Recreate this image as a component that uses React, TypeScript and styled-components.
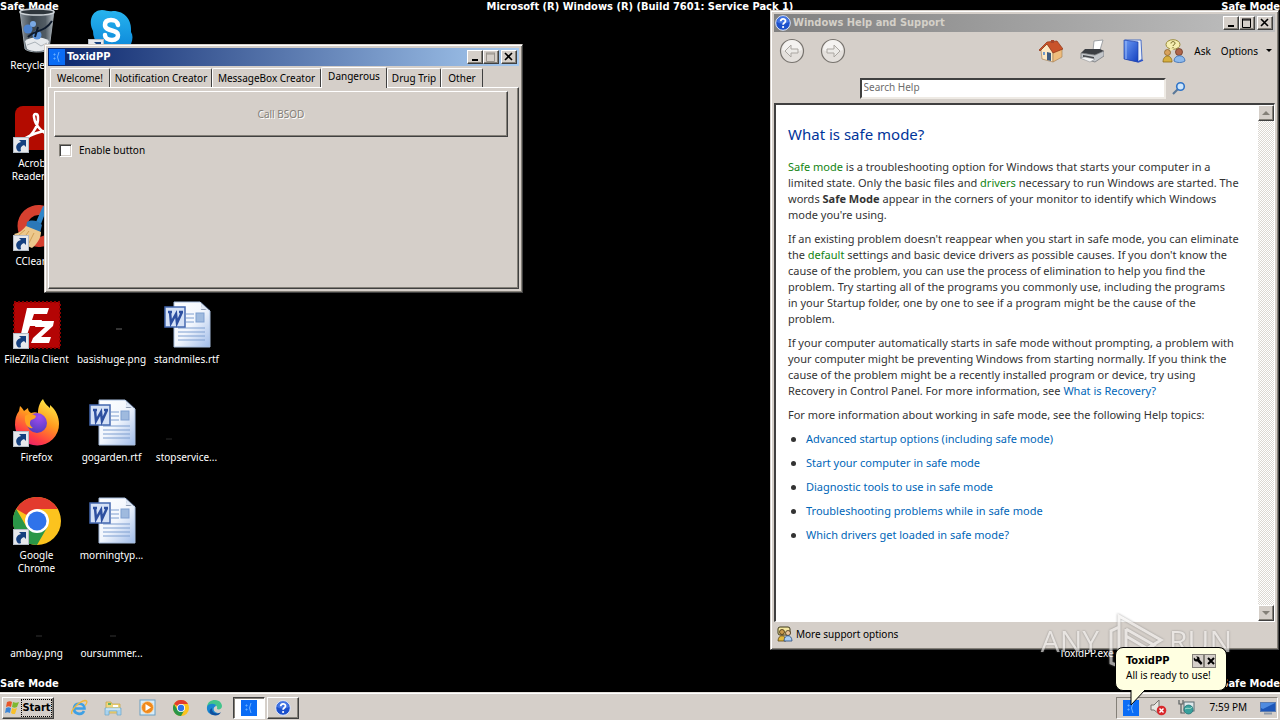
import React from "react";
import styled, { createGlobalStyle, css } from "styled-components";

const face = "#d5cfc9";
const ui = `"Noto Sans", "Open Sans", sans-serif`;
const uiBold = `"DejaVu Sans Condensed", "DejaVu Sans", sans-serif`;

const GlobalStyle = createGlobalStyle`
  * { box-sizing: border-box; }
  body { margin: 0; background: #000; font: 10px/13px ${ui}; color: #000; }
  button, input { font: inherit; color: inherit; margin: 0; }
  a { text-decoration: none; }
`;

const raised = css`
  border: 1px solid;
  border-color: #fff #404040 #404040 #fff;
  box-shadow: inset -1px -1px 0 #848078;
`;

const Page = styled.div`
  position: relative;
  display: flex;
  flex-direction: column;
  min-height: 100vh;
  overflow: hidden;
`;

const Desktop = styled.main`
  position: relative;
  flex: 1;
  display: flex;
  flex-direction: column;
`;

const SafeRow = styled.div`
  display: flex;
  justify-content: space-between;
  color: #fff;
  font: bold 11px/14px ${uiBold};
  white-space: nowrap;
`;

const SafeTop = styled(SafeRow)`
  position: absolute;
  inset: 0 0 auto 0;
`;

const SafeBottom = styled(SafeRow)`
  position: absolute;
  inset: auto 0 1px 0;
`;

const IconGrid = styled.ul`
  position: relative;
  display: grid;
  grid-template-columns: repeat(auto-fill, 75px);
  grid-template-rows: repeat(7, 98px);
  margin: 0 0 -2px;
  padding: 7px 0 0;
  list-style: none;
`;

const Shortcut = styled.li<{ $col: number; $row: number }>`
  grid-column: ${(p) => p.$col};
  grid-row: ${(p) => p.$row};
  display: flex;
  flex-direction: column;
  align-items: center;
  gap: 4px;
  padding-right: 2px;
  color: #fff;
  text-align: center;
  white-space: pre-line;

  svg { display: block; }
`;

const Win = styled.section`
  position: absolute;
  display: flex;
  flex-direction: column;
  padding: 3px;
  background: ${face};
  border: 1px solid;
  border-color: ${face} #404040 #404040 ${face};
  box-shadow: inset 1px 1px 0 #fff, inset -1px -1px 0 #848078;
`;

const ToxidWin = styled(Win)`
  left: 44px;
  top: 44px;
  width: 479px;
  height: 249px;
`;

const HelpWin = styled(Win)`
  right: 1px;
  top: 10px;
  bottom: 42px;
  width: 509px;
`;

const TitleBar = styled.header<{ $active?: boolean }>`
  display: flex;
  align-items: center;
  height: 18px;
  flex: none;
  padding: 0 2px 0 1px;
  gap: 2px;
  color: ${(p) => (p.$active ? "#fff" : "#d4d0c8")};
  background: ${(p) =>
    p.$active
      ? "linear-gradient(90deg, #0a246a, #a6caf0)"
      : "linear-gradient(90deg, #808080, #c0c0c0)"};
  font: bold 11px/18px ${uiBold};

  h1 { flex: 1; margin: 0; font: inherit; }
`;

const Caption = styled.div`
  display: flex;
`;

const CaptionButton = styled.button<{ $apart?: boolean }>`
  ${raised}
  display: grid;
  place-items: center;
  width: 16px;
  height: 14px;
  padding: 0;
  margin-left: ${(p) => (p.$apart ? "2px" : "0")};
  background: ${face};
`;

const Tabs = styled.div`
  position: relative;
  display: flex;
  align-items: flex-end;
  height: 22px;
  padding-left: 2px;
  margin-bottom: -1px;
`;

const Tab = styled.button<{ $w: number; $on?: boolean }>`
  flex: 0 0 ${(p) => p.$w}px;
  height: ${(p) => (p.$on ? 21 : 19)}px;
  margin-bottom: ${(p) => (p.$on ? 0 : 1)}px;
  padding: 0 0 ${(p) => (p.$on ? 4 : 0)}px;
  border: 1px solid;
  border-width: 1px 1px 0 1px;
  border-color: #fff #404040 #404040 #fff;
  border-radius: 2px 2px 0 0;
  background: ${face};
  white-space: nowrap;
`;

const Panel = styled.div`
  ${raised}
  flex: 1;
  display: flex;
  flex-direction: column;
  align-items: flex-start;
  padding: 3px 10px 4px 5px;
`;

const BigButton = styled.button`
  ${raised}
  align-self: stretch;
  height: 46px;
  background: ${face};
  color: #848078;
  text-shadow: 1px 1px 0 #fff;
`;

const Check = styled.label`
  display: flex;
  align-items: center;
  gap: 7px;
  margin: 7px 0 0 5px;

  input {
    appearance: none;
    width: 13px;
    height: 13px;
    background: #fff;
    border: 1px solid;
    border-color: #848078 #fff #fff #848078;
    box-shadow: inset 1px 1px 0 #404040, inset -1px -1px 0 ${face};
  }
`;

const HelpBar = styled.nav`
  display: flex;
  align-items: center;
  height: 38px;
  flex: none;
  padding: 0 2px 0 5px;
`;

const NavButtons = styled.div`
  display: flex;
  gap: 15px;
  flex: 1;
`;

const FlatButton = styled.button`
  display: flex;
  align-items: center;
  justify-content: center;
  gap: 8px;
  padding: 0;
  border: 0;
  background: none;
`;

const Tools = styled.div`
  display: flex;
  gap: 17px;
`;

const Words = styled.div`
  display: flex;
  gap: 10px;
`;

const SearchBar = styled.form`
  display: flex;
  align-items: center;
  justify-content: center;
  gap: 6px;
  height: 33px;
  flex: none;
  padding: 3px 4px 0 0;
`;

const SearchInput = styled.input`
  width: 306px;
  height: 21px;
  padding: 0 2px 2px;
  border: 2px solid;
  border-color: #404040 #eeeae4 #eeeae4 #404040;
  background: #fff;
  outline: 0;

  &::placeholder { color: #6d6d6d; opacity: 1; }
`;

const Viewer = styled.div`
  flex: 1;
  display: flex;
  min-height: 0;
  border: 1px solid;
  border-width: 2px 1px 1px 2px;
  border-color: #404040 #fff #fff #404040;
  background: #fff;
`;

const Article = styled.article`
  flex: 1;
  padding: 19px 13px 0 12px;
  font: 11px/16px ${ui};
  color: #333;

  h2 { margin: 0 0 15px; font: 15px/20px ${ui}; color: #003399; }
  p { margin: 0 0 8px; }
`;

const Topics = styled.ul`
  margin: 0;
  padding: 0 0 0 3px;
  list-style: none;

  li {
    display: flex;
    align-items: center;
    gap: 10px;
    margin: 0 0 8px;
  }
  li::before {
    content: "";
    width: 5px;
    height: 5px;
    border-radius: 50%;
    background: #333;
  }
`;

const Link = styled.a`color: #0066b8;`;
const Term = styled.a`color: #128412;`;

const Scroll = styled.div`
  display: flex;
  flex-direction: column;
  justify-content: space-between;
  width: 16px;
  background: repeating-conic-gradient(#fff 0 25%, #dcd8d2 0 50%) 0 0 / 2px 2px;
`;

const ScrollButton = styled.button`
  ${raised}
  display: grid;
  place-items: center;
  width: 16px;
  height: 16px;
  padding: 0;
  background: ${face};
`;

const Footer = styled.footer`
  display: flex;
  align-items: center;
  gap: 3px;
  height: 24px;
  flex: none;
  padding-left: 3px;
`;

const Taskbar = styled.footer`
  display: flex;
  align-items: center;
  height: 28px;
  padding: 2px 2px 0;
  background: ${face};
  border-top: 1px solid #e4e0da;
  box-shadow: inset 0 1px 0 #fff;
`;

const StartButton = styled.button`
  ${raised}
  display: flex;
  align-items: center;
  gap: 1px;
  width: 52px;
  height: 22px;
  padding: 0 1px;
  background: ${face};
  font: bold 11px/16px ${uiBold};

  span {
    flex: 1;
    height: 18px;
    outline: 1px dotted #000;
    outline-offset: -1px;
    line-height: 18px;
    text-align: center;
  }
`;

const QuickLaunch = styled.div`
  display: flex;
  padding: 0 2px 0 8px;
`;

const Launch = styled.button`
  display: grid;
  place-items: center;
  width: 34px;
  height: 22px;
  padding: 0;
  border: 0;
  background: none;

  &:last-child { width: 33px; }
`;

const Task = styled.button<{ $on?: boolean }>`
  ${raised}
  display: grid;
  place-items: center;
  width: 32px;
  height: 22px;
  padding: 0;
  margin-right: 2px;
  background: ${(p) => (p.$on ? "#fff" : face)};
  ${(p) =>
    p.$on &&
    css`
      border-color: #404040 #fff #fff #404040;
      box-shadow: inset 1px 1px 0 #848078;
    `}
`;

const Tray = styled.div`
  display: flex;
  align-items: center;
  justify-content: space-between;
  width: 162px;
  height: 22px;
  margin-left: auto;
  padding: 0 1px 0 6px;
  border: 1px solid;
  border-color: #848078 #fff #fff #848078;
`;

const Clock = styled.time`padding: 0 2px 0 4px;`;

const Balloon = styled.aside`
  position: absolute;
  right: 53px;
  bottom: 29px;
  width: 112px;
  height: 44px;
  padding: 6px 10px;
  background: #ffffe1;
  border: 1px solid #000;
  border-radius: 8px;
  line-height: 14px;
  white-space: nowrap;
`;

const BalloonHead = styled.div`
  display: flex;
  align-items: center;
  height: 14px;

  strong { flex: 1; font: bold 11px/14px ${uiBold}; }
`;

const BalloonButton = styled.button`
  display: grid;
  place-items: center;
  width: 12px;
  height: 14px;
  padding: 0;
  background: ${face};
  border: 1px solid #848078;
`;

const Tail = styled.svg`
  position: absolute;
  left: 14px;
  top: 41px;
`;

const Watermark = styled.div`
  position: absolute;
  right: 48px;
  bottom: 49px;
  display: flex;
  align-items: center;
  opacity: 0.65;
  color: #f4f2f0;
  font: 400 30px/60px "Open Sans", sans-serif;
  text-shadow: 0 0 2px #666;
  pointer-events: none;

  svg { filter: drop-shadow(0 0 1px #777); }
`;

const Arrow = () => (
  <g>
    <rect x=".5" y="32.500" width="15" height="15" fill="#e6e8ec" stroke="#b4bcc6" />
    <path d="M4 45c-2-4 0-7 4-8l-2-2h7v7l-2-2c-3 1-4 3-3 6-2 1-3 .5-4-1z" fill="#15407f" />
  </g>
);

const Big = ({ children }: { children?: React.ReactNode }) => (
  <svg width="48" height="48" viewBox="0 0 48 48" aria-hidden="true">
    {children}
  </svg>
);

const Bin = () => (
  <Big>
    <defs>
      <linearGradient id="bin" x1="0" y1="0" x2="1" y2="0">
        <stop offset="0" stopColor="#8a949c" />
        <stop offset=".35" stopColor="#3c464e" />
        <stop offset=".75" stopColor="#525c64" />
        <stop offset="1" stopColor="#b4bcc2" />
      </linearGradient>
    </defs>
    <path d="M7 4h34l-5 38c-3 4-20 4-24 0z" fill="url(#bin)" stroke="#9aa3aa" />
    <ellipse cx="24" cy="5" rx="17" ry="3" fill="#2e363c" stroke="#cdd3d8" strokeWidth="1.500" />
    <path d="M12 34c6-5 18-5 24 0l-2 8c-6 3-15 3-20 0z" fill="#e6e9ec" />
    <path d="M14 38l8-3 6 4 6-3" stroke="#aab2b8" fill="none" />
    <circle cx="15" cy="22" r="4.500" fill="#4c83cf" />
    <circle cx="24" cy="28" r="4.500" fill="#5b93dc" />
    <circle cx="20" cy="17" r="3" fill="#7aa9e4" />
    <path d="M15 30c8-8 16-4 24-16M22 30l3-10" stroke="#0e1a2c" strokeWidth="2" fill="none" />
  </Big>
);

const Skype = () => (
  <Big>
    <defs>
      <linearGradient id="sky" x1="0" y1="0" x2="0" y2="1">
        <stop offset="0" stopColor="#27b4ee" />
        <stop offset="1" stopColor="#0a84d8" />
      </linearGradient>
    </defs>
    <path d="M14 3c5 0 6 2 11 1 12 0 19 9 18 21 2 3 2 7 0 12-3 8-11 9-16 6-12 2-22-7-22-19C0 14 4 3 14 3z" fill="url(#sky)" />
    <path d="M30 18c-1-4-3-5-7-5-4 0-6 2-6 5 0 7 13 4 13 10 0 4-3 5-6 5-4 0-7-2-7-5" fill="none" stroke="#fff" strokeWidth="4.500" strokeLinecap="round" />
    <Arrow />
  </Big>
);

const Acrobat = () => (
  <Big>
    <rect x="2" y="1" width="45" height="44" rx="8" fill="#b30b00" />
    <path d="M9 36c8-3 17-14 16-24 0-4-5-4-4 0 1 9 10 18 18 18 5 0 4-4 0-4-10-1-23 4-29 9-2 2-2 3-1 1z" fill="none" stroke="#fff" strokeWidth="2.500" />
    <Arrow />
  </Big>
);

const CCleaner = () => (
  <Big>
    <path d="M42 10A21 21 0 1 0 42 36l-8-6a11 11 0 1 1 0-14z" fill="#d6402f" />
    <path d="M30 3l4 2-6 16-5-2z" fill="#2f86c8" />
    <path d="M14 19c5-3 12-1 15 3l-2 8-14-5z" fill="#2b78b8" />
    <path d="M13 23l15 6c0 6-4 12-9 16-6-2-12-7-18-14 5-1 9-4 12-8z" fill="#ecc88c" />
    <path d="M16 28l-6 8M21 30l-5 10M12 27l-6 5" stroke="#cf9f55" fill="none" />
    <Arrow />
  </Big>
);

const FileZilla = () => (
  <Big>
    <rect x="1" y="1" width="46" height="46" fill="#b40404" stroke="#8c0000" strokeWidth="2" strokeDasharray="2 2" />
    <path d="M14 7h22l-2 6H21l-2 6h10l-2 6H17l-4 12H7z" fill="#fff" />
    <path d="M24 20h17l-1 5-12 11h10l-2 6H18l2-5 12-11h-10z" fill="#fff" />
    <Arrow />
  </Big>
);

const Firefox = () => (
  <Big>
    <defs>
      <linearGradient id="ff" x1=".8" y1="0" x2=".3" y2="1">
        <stop offset="0" stopColor="#fff04a" />
        <stop offset=".45" stopColor="#ff9a1f" />
        <stop offset=".8" stopColor="#ff3d44" />
        <stop offset="1" stopColor="#e8206e" />
      </linearGradient>
      <radialGradient id="ffg" cx=".6" cy=".2" r=".9">
        <stop offset="0" stopColor="#a14cf0" />
        <stop offset="1" stopColor="#4a3ab8" />
      </radialGradient>
    </defs>
    <path d="M30 0c2 5 4 6 7 9v-3c6 5 9 12 9 19a22 21 0 0 1-44 1c0-6 1-10 4-14l1-5c2 2 3 3 4 5l4-3c0 2 1 4 3 5 3-1 5-1 7 0 0-6 2-11 5-14z" fill="url(#ff)" />
    <circle cx="24" cy="24" r="10" fill="url(#ffg)" />
    <path d="M12 17c4-3 8-2 11 0 0 2-2 3-5 4-2 3-1 6 2 8-5 1-9-4-8-12z" fill="#ffa320" />
    <Arrow />
  </Big>
);

const ChromeArt = () => (
  <g>
    <circle cx="24" cy="24" r="24" fill="#fcc31e" />
    <path d="M24 24L3.200 12A24 24 0 0 1 44.800 12H24z" fill="#e33b2e" />
    <path d="M3.200 12A24 24 0 0 0 24 48L34.400 30 24 24 13.600 30z" fill="#2a9648" />
    <circle cx="24" cy="24" r="12" fill="#fff" />
    <circle cx="24" cy="24" r="9.500" fill="#2f73ea" />
  </g>
);

const ChromeBig = () => (
  <Big>
    <ChromeArt />
    <Arrow />
  </Big>
);

const WordDoc = () => (
  <Big>
    <defs>
      <linearGradient id="doc" x1="0" y1="0" x2="1" y2="1">
        <stop offset="0" stopColor="#fff" />
        <stop offset=".5" stopColor="#f2f6fd" />
        <stop offset="1" stopColor="#9fbbe8" />
      </linearGradient>
    </defs>
    <path d="M11 1h26l10 9v36H11z" fill="url(#doc)" stroke="#a8bede" />
    <path d="M38 1v8h9z" fill="#3d4f6c" />
    <path d="M37 1c2 4 1 6 0 8 4-1 7 0 10 1z" fill="#dfe8f6" />
    <path d="M23 13h8M23 17h8M23 21h8M15 27h27M15 31h27M15 35h27M15 39h27" stroke="#7f9fd0" />
    <rect x="33" y="12" width="8" height="9" fill="#9fbade" stroke="#7f9fd0" />
    <rect x="2" y="6" width="20" height="20" fill="#d5e1f6" stroke="#4468b0" strokeWidth="1.500" />
    <path d="M5 11h4M7 11l1 11 5-9 1 9 5-11M16 11h4" stroke="#2d4fa0" strokeWidth="2.500" fill="none" />
  </Big>
);

const DarkThumb = ({ tone, x, y }: { tone: string; x: number; y: number }) => (
  <Big>
    <path d={`M${x} ${y}h6`} stroke={tone} />
  </Big>
);

const SadFace = () => (
  <svg width="16" height="16" viewBox="0 0 16 16" aria-hidden="true">
    <rect width="16" height="16" fill="#0a6cf5" />
    <path d="M5 5h1v1H5zM5 9h1v1H5zM10 3q-3 5 0 10" fill="none" stroke="#6fb2ff" />
  </svg>
);

const HelpBadge = () => (
  <svg width="16" height="16" viewBox="0 0 16 16" aria-hidden="true">
    <circle cx="8" cy="8" r="7.300" fill="#1c50cc" stroke="#dfe8fb" strokeWidth="1" />
    <path d="M2 7a6 6 0 0 1 12 0c-3 2-9 2-12 0z" fill="#5b8cf0" opacity=".6" />
    <path d="M5.700 6.300c0-3.200 4.800-3.200 4.800-.3 0 1.800-2.400 1.700-2.400 3.700" fill="none" stroke="#fff" strokeWidth="1.800" />
    <circle cx="8.100" cy="12" r="1.100" fill="#fff" />
  </svg>
);

const Glyph = ({ d, w = 1, tone = "#000" }: { d: string; w?: number; tone?: string }) => (
  <svg width="12" height="10" viewBox="0 0 12 10" aria-hidden="true">
    <path d={d} fill="none" stroke={tone} strokeWidth={w} />
  </svg>
);

const CaptionButtons = ({ grey }: { grey?: boolean }) => (
  <Caption>
    <CaptionButton aria-label="Minimize">
      <Glyph d="M3 8h6" w={2} />
    </CaptionButton>
    <CaptionButton aria-label="Maximize">
      <Glyph d="M1.500 1v8.500h8V1M1 1h9M1 2h9" tone={grey ? "#98938c" : "#000"} />
    </CaptionButton>
    <CaptionButton aria-label="Close" $apart>
      <Glyph d="M2 1l7 7M9 1l-7 7" w={1.6} />
    </CaptionButton>
  </Caption>
);

const Circle = ({ flip }: { flip?: boolean }) => (
  <svg width="26" height="26" viewBox="0 0 26 26" aria-hidden="true">
    <circle cx="13" cy="13" r="11.500" fill="#e4e0dc" stroke="#77736e" strokeWidth="1.200" />
    <path d="M3 12a10 10 0 0 1 20 0c-6 2-14 2-20 0z" fill="#f4f2f0" />
    <path
      d={flip ? "M20 13l-6-6v4H7v4h7v4z" : "M6 13l6-6v4h7v4h-7v4z"}
      fill="#eceae7"
      stroke="#aaa6a1"
      strokeLinejoin="round"
    />
  </svg>
);

const House = () => (
  <svg width="24" height="24" viewBox="0 0 24 24" aria-hidden="true">
    <path d="M2 11l6-6 6 8v10L3 20z" fill="#fbe8c4" stroke="#a98457" strokeWidth=".7" />
    <path d="M14 13l9-3v8l-9 5z" fill="#eebc7c" stroke="#a98457" strokeWidth=".7" />
    <path d="M8 3l10-1 6 8-10 4-6-9-7 7-1-1z" fill="#c9532a" stroke="#8f3515" strokeWidth=".7" />
    <path d="M12 1h3v3h-3z" fill="#a8452a" />
    <path d="M8 13l4 1v8l-4-1z" fill="#3e5b7e" />
    <path d="M4 13h2v3H4z" fill="#6e9acc" />
  </svg>
);

const Printer = () => (
  <svg width="24" height="24" viewBox="0 0 24 24" aria-hidden="true">
    <path d="M14 2l9-1-3 10-7 1z" fill="#fff" stroke="#8c9096" strokeWidth=".8" />
    <path d="M5 10l15 0 4 2-9 4L1 14z" fill="#3a3d42" />
    <path d="M1 14l14 2 9-4v5l-9 6L1 19z" fill="#c3c6ca" stroke="#6b6e73" strokeWidth=".7" />
    <path d="M3 16l11 2v2L3 18z" fill="#44474c" />
    <path d="M0 19l5-1 10 2-5 3z" fill="#f4f5f6" stroke="#84878b" strokeWidth=".5" />
  </svg>
);

const Book = () => (
  <svg width="24" height="24" viewBox="0 0 24 24" aria-hidden="true">
    <defs>
      <linearGradient id="book" x1="0" y1="0" x2="1" y2="1">
        <stop offset="0" stopColor="#6d9cf5" />
        <stop offset="1" stopColor="#1440c0" />
      </linearGradient>
    </defs>
    <path d="M4 1h16l1 19-4 3-12-3z" fill="#e9eef8" stroke="#2a55c0" strokeWidth=".8" />
    <path d="M3 1l14 2v20L3 20z" fill="url(#book)" stroke="#1e3fa8" strokeWidth=".7" />
    <path d="M17 23l5-2" stroke="#2c53c8" strokeWidth="1.500" />
    <path d="M5 2v18" stroke="#9ebcf8" />
  </svg>
);

const People = () => (
  <svg width="24" height="24" viewBox="0 0 24 24" aria-hidden="true">
    <ellipse cx="11" cy="5.500" rx="7" ry="4.800" fill="#f5eeb0" stroke="#9b8c3c" />
    <path d="M8 9l-1 4 5-3z" fill="#f5eeb0" />
    <path d="M9 4.500c0-2.500 4-2.500 4-.2 0 1.500-2 1.200-2 2.700M11 8v1" stroke="#6d6120" fill="none" />
    <circle cx="5.500" cy="13.500" r="3" fill="#d8a25c" stroke="#8a6428" strokeWidth=".8" />
    <path d="M1 23c0-8 9-8 9 0z" fill="#d7b040" stroke="#8a6a18" strokeWidth=".8" />
    <circle cx="17" cy="13" r="3.500" fill="#b0654a" stroke="#6d3a26" strokeWidth=".8" />
    <path d="M12 22c0-7 11-7 11 0-3 2-8 2-11 0z" fill="#8db9ec" stroke="#3769ae" strokeWidth=".8" />
  </svg>
);

const SmallPeople = () => (
  <svg width="16" height="16" viewBox="0 0 16 16" aria-hidden="true">
    <rect x="1" y="1" width="12" height="8" rx="2" fill="#f3e6a0" stroke="#3e3818" />
    <circle cx="5" cy="6" r="2.500" fill="#c99a4a" stroke="#3e2c10" strokeWidth=".8" />
    <path d="M1 15c0-7 8-7 8 0z" fill="#e2b83c" stroke="#5a4410" strokeWidth=".8" />
    <circle cx="11" cy="7" r="2.500" fill="#eac69c" stroke="#3e2c10" strokeWidth=".8" />
    <path d="M7 15c0-7 8-7 8 0z" fill="#a9cdf2" stroke="#244a80" strokeWidth=".8" />
  </svg>
);

const Magnifier = () => (
  <svg width="14" height="14" viewBox="0 0 14 14" aria-hidden="true">
    <path d="M6 8l-5 5" stroke="#5a7898" strokeWidth="2.200" />
    <circle cx="8.500" cy="5.500" r="3.800" fill="#cfe6fa" stroke="#2f74c8" strokeWidth="1.600" />
  </svg>
);

const Flag = () => (
  <svg width="16" height="16" viewBox="0 0 16 16" aria-hidden="true">
    <path d="M3 2c2-1 4-1 5 0L7 7c-2-1-3-1-5 0z" fill="#e8562a" />
    <path d="M9 2c2 1 4 1 6 0l-2 5c-2 1-3 1-5 0z" fill="#7fb832" />
    <path d="M2 8c2-1 3-1 5 0l-1 5c-2-1-3-1-5 0z" fill="#3c86d8" />
    <path d="M8 8c2 1 3 1 5 0l-2 6c-2 0-3 0-4-1z" fill="#f8c02a" />
  </svg>
);

const IE = () => (
  <svg width="18" height="18" viewBox="0 0 18 18" aria-hidden="true">
    <path d="M4.500 9.500h10c0-6-9.500-6.500-10.500-.5-.5 6.500 8 7.500 10 3" fill="none" stroke="#3fa0e4" strokeWidth="2.600" />
    <path d="M2 15C0 12 8 3 15 1.500c3 0 2 3 0 5" fill="none" stroke="#f0b83c" strokeWidth="1.300" />
  </svg>
);

const Explorer = () => (
  <svg width="18" height="18" viewBox="0 0 18 18" aria-hidden="true">
    <path d="M2 3h5l1 2h8v9H2z" fill="#f2d77c" stroke="#c9a440" strokeWidth=".7" />
    <path d="M4 4h3v2H4z" fill="#63b060" />
    <path d="M9 6h5v2H9z" fill="#fff" />
    <path d="M1 9h16v7h-4v-4H5v4H1z" fill="#a9d3ee" stroke="#6ba8cc" strokeWidth=".7" />
    <path d="M2 10h14" stroke="#e9f6fd" />
  </svg>
);

const Media = () => (
  <svg width="17" height="17" viewBox="0 0 17 17" aria-hidden="true">
    <rect x="1" y="1" width="15" height="15" fill="#d8ecf8" stroke="#6ba0c4" />
    <circle cx="8.500" cy="8.500" r="6" fill="#f08a1c" stroke="#fbd09a" strokeWidth=".8" />
    <path d="M6.500 5l5.500 3.500-5.500 3.500z" fill="#fff" />
  </svg>
);

const ChromeSmall = () => (
  <svg width="16" height="16" viewBox="0 0 48 48" aria-hidden="true">
    <ChromeArt />
  </svg>
);

const Edge = () => (
  <svg width="17" height="17" viewBox="0 0 17 17" aria-hidden="true">
    <path d="M1 9C1 3 5 1 9 1c5 0 7 4 7 6 0 3-3 4-5 3 1-3-2-5-5-4-3 0-5 3-5 3z" fill="#42c48c" />
    <path d="M1 8c1-4 9-4 9-1-3 1-4 6 2 7-4 4-12 1-11-6z" fill="#1a86d0" />
    <path d="M6 9c-1 5 5 7 9 4-2 5-9 4-11 1-1-2 0-4 2-5z" fill="#0f4f9e" />
  </svg>
);

const Speaker = () => (
  <svg width="17" height="17" viewBox="0 0 17 17" aria-hidden="true">
    <path d="M1 6h3l5-5v14l-5-4H1z" fill="#e8e6e2" stroke="#77736e" />
    <circle cx="11.500" cy="11.500" r="4.800" fill="#d8282c" />
    <path d="M9.500 9.500l4 4M13.500 9.500l-4 4" stroke="#fff" strokeWidth="1.500" />
  </svg>
);

const Network = () => (
  <svg width="17" height="17" viewBox="0 0 17 17" aria-hidden="true">
    <path d="M1 1v4h4V1M3 5v9h4" fill="none" stroke="#5a5f60" strokeWidth="1.200" />
    <rect x="6" y="3" width="10" height="9" fill="#dfe9ec" stroke="#5a6a70" />
    <circle cx="10.500" cy="10.500" r="4.500" fill="#38a09c" stroke="#1e6c70" strokeWidth=".7" />
    <path d="M7 10c3-2 5 1 7-2" stroke="#a9e0d0" fill="none" />
  </svg>
);

const ShowDesktop = () => (
  <svg width="16" height="16" viewBox="0 0 16 16" aria-hidden="true">
    <rect x=".5" y="2.500" width="15" height="9" fill="#1d56b8" stroke="#5a7bb0" />
    <path d="M1 3h14L3 9l-2-1z" fill="#4f8be0" />
    <path d="M4 13.500h8" stroke="#8c98a8" strokeWidth="2" />
  </svg>
);

const Wrench = () => (
  <svg width="10" height="10" viewBox="0 0 10 10" aria-hidden="true">
    <path d="M1 1.500l2 2L4.500 2 3 .5c3-.5 4 1 3.500 3L9.500 7 8 9 4.500 5.500C2 6 0 4 1 1.500z" fill="#000" />
  </svg>
);

const tabs: [string, number][] = [
  ["Welcome!", 60],
  ["Notification Creator", 102],
  ["MessageBox Creator", 109],
  ["Dangerous", 66],
  ["Drug Trip", 54],
  ["Other", 42],
];

const topics = [
  "Advanced startup options (including safe mode)",
  "Start your computer in safe mode",
  "Diagnostic tools to use in safe mode",
  "Troubleshooting problems while in safe mode",
  "Which drivers get loaded in safe mode?",
];

const icons: { col: number; row: number; name: string; art: React.ReactNode }[] = [
  { col: 1, row: 1, name: "Recycle Bin", art: <Bin /> },
  { col: 2, row: 1, name: "Skype", art: <Skype /> },
  { col: 1, row: 2, name: "Acrobat\nReader DC", art: <Acrobat /> },
  { col: 1, row: 3, name: "CCleaner", art: <CCleaner /> },
  { col: 1, row: 4, name: "FileZilla Client", art: <FileZilla /> },
  { col: 2, row: 4, name: "basishuge.png", art: <DarkThumb x={28} y={28} tone="#666" /> },
  { col: 3, row: 4, name: "standmiles.rtf", art: <WordDoc /> },
  { col: 1, row: 5, name: "Firefox", art: <Firefox /> },
  { col: 2, row: 5, name: "gogarden.rtf", art: <WordDoc /> },
  { col: 3, row: 5, name: "stopservice...", art: <DarkThumb x={3} y={40} tone="#2a2a2a" /> },
  { col: 1, row: 6, name: "Google\nChrome", art: <ChromeBig /> },
  { col: 2, row: 6, name: "morningtyp...", art: <WordDoc /> },
  { col: 1, row: 7, name: "ambay.png", art: <DarkThumb x={23} y={41} tone="#333" /> },
  { col: 2, row: 7, name: "oursummer...", art: <DarkThumb x={22} y={41} tone="#333" /> },
  { col: 15, row: 7, name: "ToxidPP.exe", art: <DarkThumb x={22} y={41} tone="#000" /> },
];

export default function App() {
  return (
    <Page>
      <GlobalStyle />
      <Desktop>
        <SafeTop>
          <span>Safe Mode</span>
          <span>Microsoft (R) Windows (R) (Build 7601: Service Pack 1)</span>
          <span>Safe Mode</span>
        </SafeTop>
        <IconGrid>
          {icons.map((i) => (
            <Shortcut key={i.name} $col={i.col} $row={i.row}>
              {i.art}
              {i.name}
            </Shortcut>
          ))}
        </IconGrid>
        <SafeBottom>
          <span>Safe Mode</span>
          <span>Safe Mode</span>
        </SafeBottom>

        <ToxidWin>
          <TitleBar $active>
            <SadFace />
            <h1>ToxidPP</h1>
            <CaptionButtons grey />
          </TitleBar>
          <Tabs role="tablist">
            {tabs.map(([name, w]) => (
              <Tab key={name} role="tab" aria-selected={name === "Dangerous"} $w={w} $on={name === "Dangerous"}>
                {name}
              </Tab>
            ))}
          </Tabs>
          <Panel>
            <BigButton disabled>Call BSOD</BigButton>
            <Check>
              <input type="checkbox" />
              Enable button
            </Check>
          </Panel>
        </ToxidWin>

        <HelpWin>
          <TitleBar>
            <HelpBadge />
            <h1>Windows Help and Support</h1>
            <CaptionButtons />
          </TitleBar>
          <HelpBar>
            <NavButtons>
              <FlatButton aria-label="Back"><Circle /></FlatButton>
              <FlatButton aria-label="Forward"><Circle flip /></FlatButton>
            </NavButtons>
            <Tools>
              <FlatButton aria-label="Home"><House /></FlatButton>
              <FlatButton aria-label="Print"><Printer /></FlatButton>
              <FlatButton aria-label="Browse Help"><Book /></FlatButton>
              <Words>
                <FlatButton><People />Ask</FlatButton>
                <FlatButton>
                  Options
                  <svg width="7" height="4" viewBox="0 0 7 4" aria-hidden="true"><path d="M0 0h6L3 3z" /></svg>
                </FlatButton>
              </Words>
            </Tools>
          </HelpBar>
          <SearchBar>
            <SearchInput type="text" aria-label="Search Help" placeholder="Search Help" />
            <FlatButton type="button" aria-label="Search"><Magnifier /></FlatButton>
          </SearchBar>
          <Viewer>
            <Article>
              <h2>What is safe mode?</h2>
              <p>
                <Term href="#safe-mode">Safe mode</Term> is a troubleshooting option for Windows that starts your
                computer in a limited state. Only the basic files and <Term href="#drivers">drivers</Term> necessary to
                run Windows are started. The words <b>Safe Mode</b> appear in the corners of your monitor to identify
                which Windows mode you're using.
              </p>
              <p>
                If an existing problem doesn't reappear when you start in safe mode, you can eliminate the{" "}
                <Term href="#default">default</Term> settings and basic device drivers as possible causes. If you don't
                know the cause of the problem, you can use the process of elimination to help you find the problem. Try
                starting all of the programs you commonly use, including the programs
                <br />
                in your Startup folder, one by one to see if a program might be the cause of the
                <br />
                problem.
              </p>
              <p>
                If your computer automatically starts in safe mode without prompting, a problem with your computer might
                be preventing Windows from starting normally. If you think the cause of the problem might be a recently
                installed program or device, try using Recovery in Control Panel. For more information, see{" "}
                <Link href="#recovery">What is Recovery?</Link>
              </p>
              <p>For more information about working in safe mode, see the following Help topics:</p>
              <Topics>
                {topics.map((t) => (
                  <li key={t}><Link href="#topic">{t}</Link></li>
                ))}
              </Topics>
            </Article>
            <Scroll>
              <ScrollButton aria-label="Scroll up">
                <svg width="8" height="4" viewBox="0 0 8 4" aria-hidden="true"><path d="M0 4l4-4 4 4z" fill="#848078" /></svg>
              </ScrollButton>
              <ScrollButton aria-label="Scroll down">
                <svg width="8" height="4" viewBox="0 0 8 4" aria-hidden="true"><path d="M0 0l4 4 4-4z" fill="#848078" /></svg>
              </ScrollButton>
            </Scroll>
          </Viewer>
          <Footer>
            <SmallPeople />
            More support options
          </Footer>
        </HelpWin>
      </Desktop>

      <Taskbar>
        <StartButton><Flag /><span>Start</span></StartButton>
        <QuickLaunch>
          <Launch aria-label="Internet Explorer"><IE /></Launch>
          <Launch aria-label="Windows Explorer"><Explorer /></Launch>
          <Launch aria-label="Media Player"><Media /></Launch>
          <Launch aria-label="Google Chrome"><ChromeSmall /></Launch>
          <Launch aria-label="Microsoft Edge"><Edge /></Launch>
        </QuickLaunch>
        <Task $on aria-label="ToxidPP"><SadFace /></Task>
        <Task aria-label="Windows Help and Support"><HelpBadge /></Task>
        <Tray>
          <SadFace />
          <Speaker />
          <Network />
          <Clock>7:59 PM</Clock>
          <ShowDesktop />
        </Tray>
      </Taskbar>

      <Watermark aria-hidden="true">
        ANY
        <svg width="70" height="60" viewBox="0 0 70 60">
          <path
            d="M20 16l-8 4v32l5 2M20 50V5l42 24-38 23M27 18v28M27 18l28 16-6 4-22-13"
            fill="none"
            stroke="#f4f2f0"
            strokeWidth="3"
          />
        </svg>
        RUN
      </Watermark>

      <Balloon>
        <BalloonHead>
          <strong>ToxidPP</strong>
          <BalloonButton aria-label="Options"><Wrench /></BalloonButton>
          <BalloonButton aria-label="Close"><Glyph d="M3 2l6 6M9 2l-6 6" w={2} /></BalloonButton>
        </BalloonHead>
        All is ready to use!
        <Tail width="18" height="18" viewBox="0 0 18 18" aria-hidden="true">
          <path d="M1 0v16L15 1V0z" fill="#ffffe1" />
          <path d="M1 1v15L15 1" fill="none" stroke="#000" />
        </Tail>
      </Balloon>
    </Page>
  );
}
